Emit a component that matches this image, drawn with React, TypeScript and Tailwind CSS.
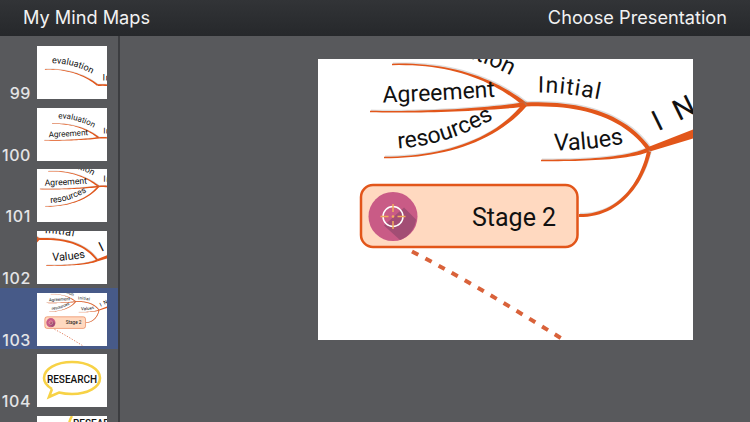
const ORANGE = "#e2561a"

type Pt = [number, number]

// cubic bezier drawn as a filled ribbon, so a branch gets thicker toward its junction
function ribbon(p: Pt[], w0: number, w1: number) {
  const left: string[] = []
  const right: string[] = []
  for (let i = 0; i <= 24; i++) {
    const t = i / 24
    const u = 1 - t
    const x = u * u * u * p[0][0] + 3 * u * u * t * p[1][0] + 3 * u * t * t * p[2][0] + t * t * t * p[3][0]
    const y = u * u * u * p[0][1] + 3 * u * u * t * p[1][1] + 3 * u * t * t * p[2][1] + t * t * t * p[3][1]
    const dx = 3 * u * u * (p[1][0] - p[0][0]) + 6 * u * t * (p[2][0] - p[1][0]) + 3 * t * t * (p[3][0] - p[2][0])
    const dy = 3 * u * u * (p[1][1] - p[0][1]) + 6 * u * t * (p[2][1] - p[1][1]) + 3 * t * t * (p[3][1] - p[2][1])
    const len = Math.hypot(dx, dy) || 1
    const w = (w0 + (w1 - w0) * t * t) / 2
    left.push(`${(x - (dy / len) * w).toFixed(2)} ${(y + (dx / len) * w).toFixed(2)}`)
    right.unshift(`${(x + (dy / len) * w).toFixed(2)} ${(y - (dx / len) * w).toFixed(2)}`)
  }
  return `M${left.join("L")}L${right.join("L")}Z`
}

function Branch({ p, w0 = 1.5, w1 = 4.5 }: { p: Pt[]; w0?: number; w1?: number }) {
  const d = ribbon(p, w0, w1)
  return (
    <>
      <path d={d} fill="#8f8f8f" fillOpacity={0.3} transform="translate(1 -1.2)" />
      <path d={d} fill={ORANGE} />
    </>
  )
}

function CurveText({ id, d, size, children, spacing = 0 }: { id: string; d: string; size: number; children: string; spacing?: number }) {
  return (
    <>
      <path id={id} d={d} fill="none" />
      <text fontSize={size} fill="#111" letterSpacing={spacing} fontFamily="Roboto, sans-serif">
        <textPath href={`#${id}`}>{children}</textPath>
      </text>
    </>
  )
}

// one drawing of the slide, each thumbnail just looks at a part of it
function MindMap({ view, step, uid }: { view: string; step: number; uid: string }) {
  return (
    <svg viewBox={view} className="block w-full h-full bg-white" preserveAspectRatio="xMidYMid slice">
      <Branch p={[[74, 6], [130, 4], [175, 20], [207, 46]]} />
      <CurveText id={`${uid}-ev`} d="M92 -9C120 -10 160 -3 205 24" size={23}>evaluation</CurveText>
      <Branch p={[[207, 46], [260, 44], [305, 55], [331, 91]]} w0={4} w1={4} />
      {step >= 1 && (
        <>
          <Branch p={[[52, 53], [100, 54], [160, 52], [207, 46]]} />
          <CurveText id={`${uid}-ag`} d="M65 44C100 43 140 41 195 37" size={23}>Agreement</CurveText>
        </>
      )}
      {step >= 2 && (
        <>
          <Branch p={[[66, 99], [120, 99], [175, 85], [207, 46]]} />
          <CurveText id={`${uid}-re`} d="M80 90C110 88 145 80 190 52" size={23}>resources</CurveText>
        </>
      )}
      <CurveText id={`${uid}-in`} d="M220 34C240 34 262 36 305 46" size={23} spacing={1}>Initial</CurveText>
      {step >= 3 && (
        <>
          <Branch p={[[223, 102], [270, 102], [310, 100], [331, 91]]} />
          <CurveText id={`${uid}-va`} d="M236 92C260 92 285 90 325 81" size={23.500}>Values</CurveText>
          <path d="M329 89L375 71V80L332 93Z" fill={ORANGE} />
          <CurveText id={`${uid}-ma`} d="M340 73L430 29" size={29} spacing={4}>I N</CurveText>
        </>
      )}
      {step >= 4 && (
        <>
          <Branch p={[[261, 157], [295, 158], [322, 132], [331, 93]]} w0={3} w1={4} />
          <path d="M94 193C150 222 200 253 250 284" fill="none" stroke="#d9623a" strokeWidth={4} strokeDasharray="7 8" />
          <rect x="43" y="126.500" width="216.500" height="62" rx="12" fill="#ffd9c0" stroke={ORANGE} strokeWidth={2.500} />
          <circle cx="75" cy="158" r="24.500" fill="#c95b86" />
          <path d="M86 149L98 161A24.500 24.500 0 0 1 82 181.500L66 167Z" fill="#a24d74" />
          <circle cx="75" cy="158" r="10" fill="none" stroke="#fff" strokeWidth={1.500} />
          <path d="M75 145.500V153.500M75 162.500V170.500M62.500 158H70.500M79.500 158H87.500" stroke="#f2ae5c" strokeWidth={1.500} />
          <circle cx="75" cy="158" r="1.300" fill="#f2ae5c" />
          <text x="154" y="167" fontSize={25} fill="#111" fontFamily="Roboto, sans-serif">Stage 2</text>
        </>
      )}
    </svg>
  )
}

function Research() {
  return (
    <svg viewBox="0 0 70 53" className="block w-full h-full bg-white">
      <path
        d="M15 35C10 32 7 28 7 24C7 15 19 8 35 8C51 8 63 15 63 24C63 33 51 40 35 40C30 40 26 39.500 22 38.500L12 43L15 35"
        fill="none"
        stroke="#f7d246"
        strokeWidth={2.600}
      />
      <text x="35" y="28.500" textAnchor="middle" fontSize={10} fontWeight={500} fill="#111" fontFamily="Roboto, sans-serif">RESEARCH</text>
    </svg>
  )
}

function NextResearch() {
  return (
    <svg viewBox="0 0 70 53" className="block w-full h-full bg-white">
      <path d="M35 0C33 3 32 6 32 10" fill="none" stroke="#f7d246" strokeWidth={2.400} />
      <text x="36" y="11" fontSize={10} fontWeight={500} fill="#111" fontFamily="Roboto, sans-serif">RESEAR</text>
    </svg>
  )
}

const slides = [
  { n: 99, view: "53 -53 179 134", step: 0 },
  { n: 100, view: "31 -39 200 151", step: 1 },
  { n: 101, view: "44 0 186 140", step: 2 },
  { n: 102, view: "203 29 149 112", step: 3 },
  { n: 103, view: "0 0 375 282", step: 4 },
]

function NumberLabel({ n }: { n: number }) {
  return <span className="self-end text-[16px] font-medium leading-[12px] tracking-[0.6px] text-[#e4e4e6]">{n}</span>
}

export default function App() {
  return (
    <div className="w-[750px] h-[422px] flex flex-col overflow-hidden bg-[#58595c] font-[Inter,sans-serif]">
      <header className="h-[36px] shrink-0 flex items-center justify-between px-[23px] bg-gradient-to-b from-[#323437] to-[#26282b] text-[#f2f2f2] text-[18.2px]">
        <span>My Mind Maps</span>
        <span>Choose Presentation</span>
      </header>
      <div className="flex flex-1 min-h-0">
        <aside className="w-[118px] shrink-0 overflow-hidden pt-[5px]">
          {slides.map((s) => (
            <div
              key={s.n}
              className={`h-[61.7px] flex justify-end gap-[6px] pr-[11px] pt-[5px] pb-[3.7px] ${s.n === 103 ? "bg-[#475a88]" : ""}`}
            >
              <NumberLabel n={s.n} />
              <div className="w-[70px] h-[53px] shrink-0">
                <MindMap view={s.view} step={s.step} uid={`s${s.n}`} />
              </div>
            </div>
          ))}
          <div className="h-[61.7px] flex justify-end gap-[6px] pr-[11px] pt-[5px] pb-[3.7px]">
            <NumberLabel n={104} />
            <div className="w-[70px] h-[53px] shrink-0">
              <Research />
            </div>
          </div>
          <div className="h-[61.7px] flex justify-end pr-[11px] pt-[5px]">
            <div className="w-[70px] h-[53px] shrink-0">
              <NextResearch />
            </div>
          </div>
        </aside>
        <div className="w-[2px] shrink-0 bg-[#3c3d40]" />
        <main className="flex-1 pl-[198px] pt-[23px]">
          <div className="w-[375px] h-[281px] overflow-hidden">
            <MindMap view="0 0 375 282" step={4} uid="main" />
          </div>
        </main>
      </div>
    </div>
  )
}
